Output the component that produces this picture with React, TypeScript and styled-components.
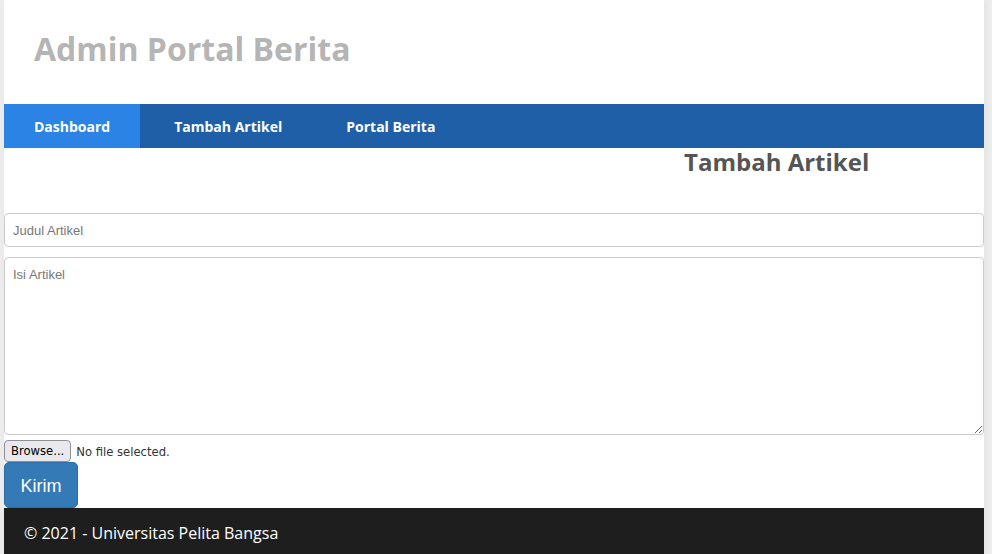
import React from "react";
import styled, { createGlobalStyle } from "styled-components";

const GlobalStyle = createGlobalStyle`
	html, body {
		margin: 0;
		padding: 0;
		background: #ececec;
	}
	body {
		font-family: "Open Sans", sans-serif;
		overflow: hidden;
	}
`;

const Page = styled.div`
	width: 980px;
	margin-left: 4px;
	background: #fff;
	box-shadow: 2px 0 6px rgba(0, 0, 0, 0.04);
`;

const Header = styled.header`
	height: 104px;
	display: flex;
	align-items: center;
	padding: 0 30px;
	box-sizing: border-box;
`;

const Title = styled.h1`
	margin: 0;
	margin-top: -7px;
	font-size: 32px;
	font-weight: 700;
	color: #b5b5b5;
`;

const Nav = styled.nav`
	display: flex;
	gap: 4px;
	height: 44px;
	background: #1f5fa8;
`;

const NavItem = styled.a<{ $active?: boolean }>`
	display: flex;
	align-items: center;
	padding: 0 30px;
	font-size: 14px;
	font-weight: 700;
	color: #fff;
	text-decoration: none;
	background: ${(p) => (p.$active ? "#2b83e6" : "transparent")};
`;

const Content = styled.main`
	display: flex;
	flex-direction: column;
`;

const HeadingRow = styled.div`
	display: flex;
	padding-left: 680px;
	height: 65px;
`;

const Heading = styled.h2`
	margin: 0;
	font-size: 24px;
	font-weight: 700;
	color: #555;
	line-height: 27px;
`;

const Form = styled.form`
	display: flex;
	flex-direction: column;
	gap: 10px;
`;

const TextInput = styled.input`
	height: 34px;
	box-sizing: border-box;
	border: 1px solid #ccc;
	border-radius: 4px;
	padding: 0 8px;
	font-family: "Liberation Sans", Arial, sans-serif;
	font-size: 13px;
	color: #555;
	&::placeholder {
		color: #777;
	}
`;

const TextArea = styled.textarea`
	height: 178px;
	box-sizing: border-box;
	border: 1px solid #ccc;
	border-radius: 4px;
	padding: 9px 8px;
	font-family: "Liberation Sans", Arial, sans-serif;
	font-size: 13px;
	resize: vertical;
	&::placeholder {
		color: #777;
	}
`;

const FileRow = styled.div`
	display: flex;
	align-items: center;
	gap: 5px;
	height: 22px;
	margin-top: -5px;
	font-family: "DejaVu Sans", sans-serif;
	font-size: 11.6px;
`;

const BrowseButton = styled.button`
	height: 22px;
	padding: 0 6px;
	border: 1px solid #8f8f9d;
	border-radius: 4px;
	background: #e9e9ed;
	font-family: "DejaVu Sans", sans-serif;
	font-size: 11.6px;
	color: #000;
`;

const FileStatus = styled.span`
	color: #333;
	padding-top: 2px;
`;

const SubmitRow = styled.div`
	display: flex;
	margin-top: -10px;
`;

const SubmitButton = styled.button`
	width: 74px;
	height: 46px;
	border: 1px solid #2e6da4;
	border-radius: 5px;
	background: #337ab7;
	color: #fff;
	font-family: "Liberation Sans", Arial, sans-serif;
	font-size: 18px;
	padding-top: 3px;
`;

const Footer = styled.footer`
	background: #1e1e1e;
	color: #fff;
	display: flex;
	align-items: center;
	padding: 0 20px 8px;
	font-size: 16px;
	box-sizing: border-box;
	height: 58px;
`;

export default function App() {
	return (
		<>
			<GlobalStyle />
			<Page>
				<Header>
					<Title>Admin Portal Berita</Title>
				</Header>
				<Nav>
					<NavItem $active href="#">
						Dashboard
					</NavItem>
					<NavItem href="#">Tambah Artikel</NavItem>
					<NavItem href="#">Portal Berita</NavItem>
				</Nav>
				<Content>
					<HeadingRow>
						<Heading>Tambah Artikel</Heading>
					</HeadingRow>
					<Form onSubmit={(e) => e.preventDefault()}>
						<TextInput placeholder="Judul Artikel" />
						<TextArea placeholder="Isi Artikel" />
						<FileRow>
							<BrowseButton type="button">Browse...</BrowseButton>
							<FileStatus>No file selected.</FileStatus>
						</FileRow>
						<SubmitRow>
							<SubmitButton type="submit">Kirim</SubmitButton>
						</SubmitRow>
					</Form>
				</Content>
				<Footer>© 2021 - Universitas Pelita Bangsa</Footer>
			</Page>
		</>
	);
}
